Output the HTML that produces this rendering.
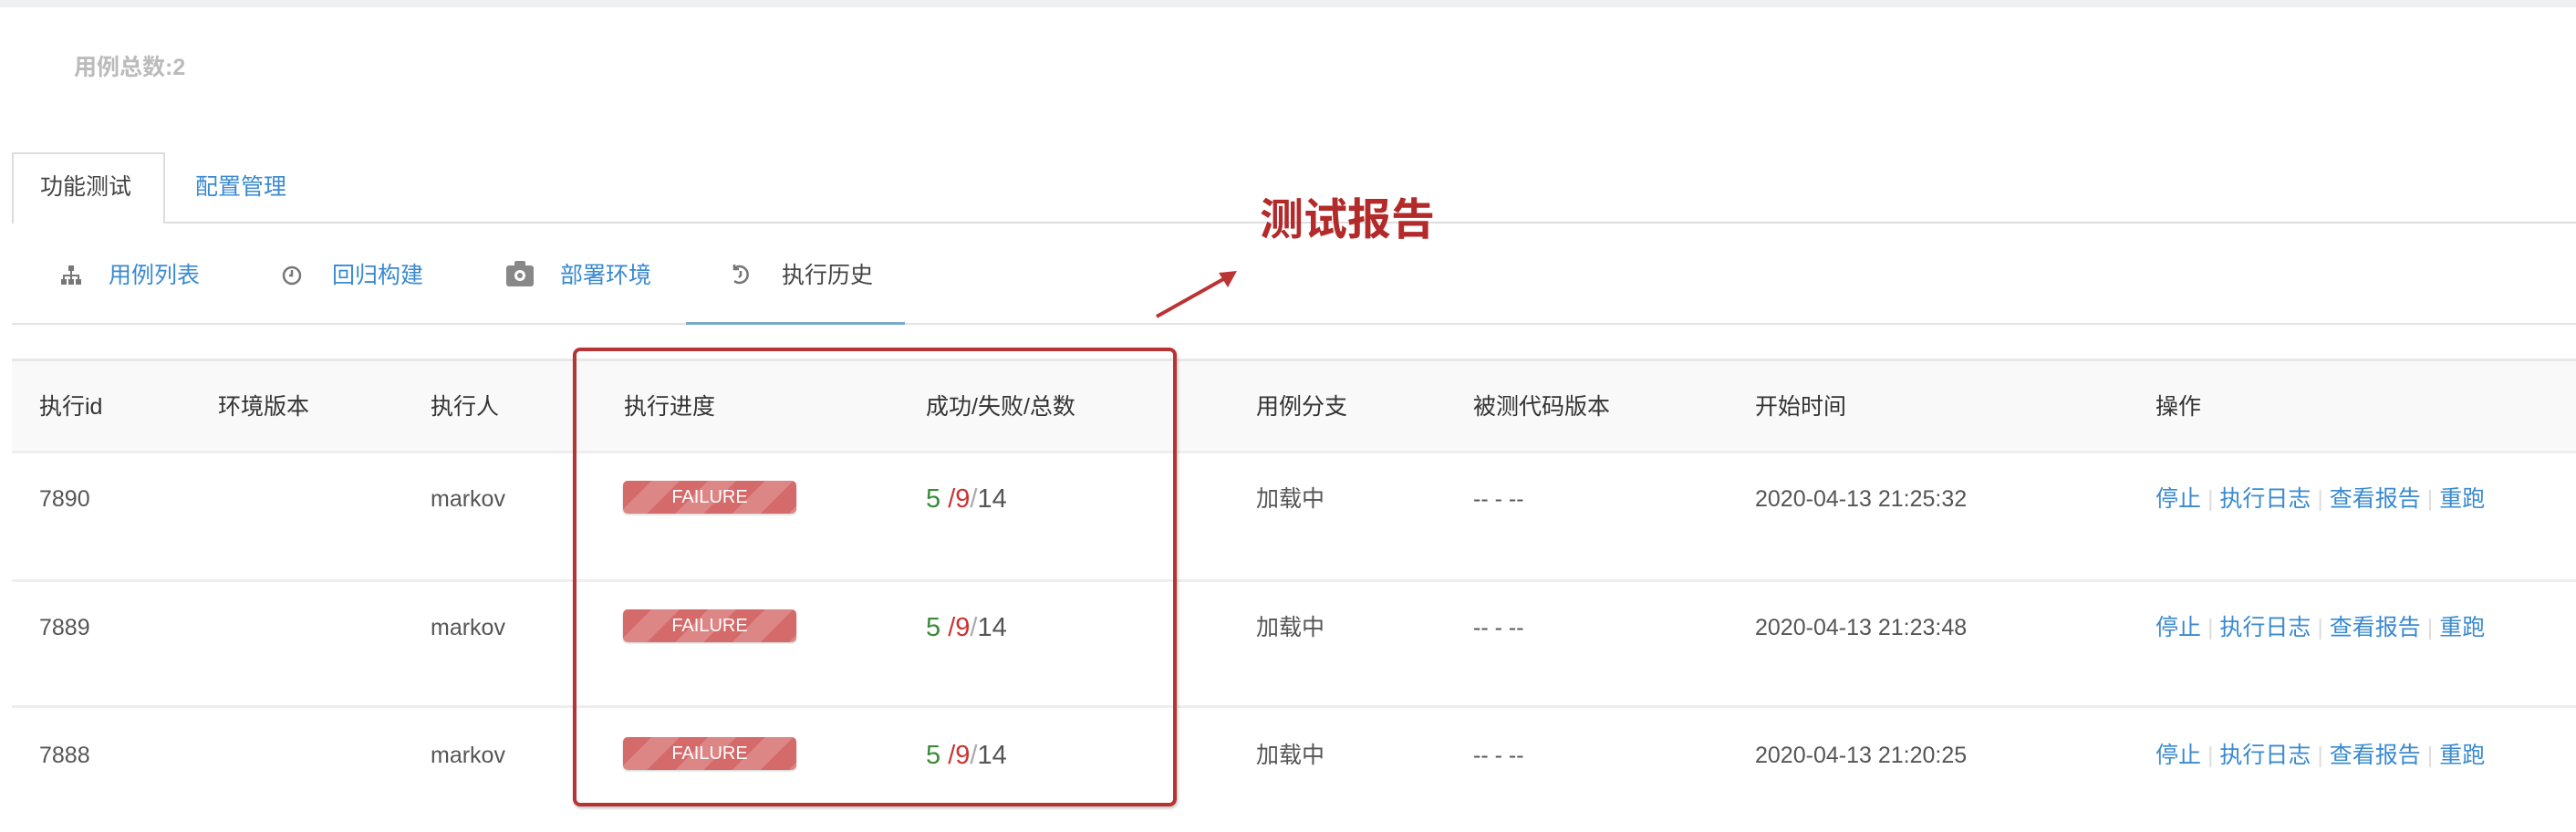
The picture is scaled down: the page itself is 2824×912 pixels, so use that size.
<!DOCTYPE html>
<html><head><meta charset="utf-8"><style>
*{margin:0;padding:0;box-sizing:border-box}
body{width:2824px;height:912px;background:#fff;position:relative;overflow:hidden;font-family:"Liberation Sans","Noto Sans CJK SC",sans-serif;font-size:25px;color:#555}
.a{position:absolute;white-space:nowrap;line-height:1}
.blue{color:#3a8ad0}
.hd{color:#333}
.badge{position:absolute;width:190px;height:36px;border-radius:5px;color:#fff;font-size:20px;text-align:center;line-height:36px;background:repeating-linear-gradient(135deg,#d46a6a 0 22px,#dd8686 22px 44px);box-shadow:0 1px 2px rgba(0,0,0,.2)}
.num{font-size:29px}
</style></head><body>
<div style="position:absolute;left:0;top:0;width:2824px;height:8px;background:#eeeff1"></div>
<div class="a" style="left:81px;top:62px;color:#bbb;font-weight:bold">用例总数:2</div>
<div style="position:absolute;left:13px;top:167px;width:168px;height:78px;border:2px solid #ddd;border-bottom:none;background:#fff;z-index:2"></div>
<div style="position:absolute;left:180px;top:243px;width:2644px;height:2px;background:#ddd"></div>
<div class="a" style="left:44px;top:193px;z-index:3;color:#444">功能测试</div>
<div class="a blue" style="left:214px;top:193px">配置管理</div>
<svg style="position:absolute;left:66px;top:290px" width="24" height="24" viewBox="0 0 24 24" fill="#777"><rect x="9" y="1" width="6" height="6"/><rect x="11" y="7" width="2" height="5"/><rect x="3" y="11" width="18" height="2"/><rect x="3" y="11" width="2" height="5"/><rect x="11" y="11" width="2" height="5"/><rect x="19" y="11" width="2" height="5"/><rect x="1" y="16" width="6" height="6"/><rect x="9" y="16" width="6" height="6"/><rect x="17" y="16" width="6" height="6"/></svg>
<div class="a blue" style="left:119px;top:290px">用例列表</div>
<svg style="position:absolute;left:308px;top:290px" width="24" height="24" viewBox="0 0 24 24" fill="none" stroke="#777" stroke-width="2.5"><circle cx="12" cy="12" r="9"/><path d="M12 6v6h-3"/></svg>
<div class="a blue" style="left:364px;top:290px">回归构建</div>
<svg style="position:absolute;left:555px;top:286px" width="30" height="28" viewBox="0 0 30 28"><rect x="0" y="5" width="30" height="23" rx="3" fill="#888"/><rect x="9" y="0" width="12" height="7" rx="2" fill="#888"/><circle cx="15" cy="16" r="6" fill="#fff"/><circle cx="15" cy="16" r="3" fill="#888"/></svg>
<div class="a blue" style="left:614px;top:290px">部署环境</div>
<svg style="position:absolute;left:800px;top:289px" width="24" height="26" viewBox="0 0 24 26" fill="none" stroke="#777" stroke-width="2.5"><path d="M5 5a9 9 0 1 1 0 14"/><path d="M5 1v5h5"/><path d="M12 8v5l-2 2"/></svg>
<div class="a" style="left:857px;top:290px;color:#444">执行历史</div>
<div style="position:absolute;left:13px;top:354px;width:2811px;height:2px;background:#e3e3e3"></div>
<div style="position:absolute;left:752px;top:353px;width:240px;height:3px;background:#7aaac8"></div>
<div class="a" style="left:1381px;top:218px;color:#b32a2a;font-size:48px;font-weight:bold">测试报告</div>
<svg style="position:absolute;left:1260px;top:285px" width="110" height="70" viewBox="0 0 110 70"><path d="M8 62L90 16" stroke="#b33" stroke-width="4"/><path d="M96 12L76 14L86 30Z" fill="#b33"/></svg>
<div style="position:absolute;left:13px;top:393px;width:2811px;height:104px;background:#f9f9f9;border-top:3px solid #e8e8e8;border-bottom:3px solid #eee"></div>
<div class="a hd" style="left:43px;top:434px">执行id</div>
<div class="a hd" style="left:239px;top:434px">环境版本</div>
<div class="a hd" style="left:472px;top:434px">执行人</div>
<div class="a hd" style="left:684px;top:434px">执行进度</div>
<div class="a hd" style="left:1015px;top:434px">成功/失败/总数</div>
<div class="a hd" style="left:1377px;top:434px">用例分支</div>
<div class="a hd" style="left:1615px;top:434px">被测代码版本</div>
<div class="a hd" style="left:1924px;top:434px">开始时间</div>
<div class="a hd" style="left:2363px;top:434px">操作</div>
<div style="position:absolute;left:13px;top:635px;width:2811px;height:3px;background:#eee"></div>
<div style="position:absolute;left:13px;top:773px;width:2811px;height:3px;background:#eee"></div>

<div class="a" style="left:43px;top:535px">7890</div><div class="a" style="left:472px;top:535px">markov</div>
<div class="badge" style="left:683px;top:527px">FAILURE</div>
<div class="a num" style="left:1015px;top:533px"><span style="color:#3a8a3a">5</span> <span style="color:#c33">/9</span><span style="color:#aaa">/</span>14</div>
<div class="a" style="left:1377px;top:535px">加载中</div><div class="a" style="left:1615px;top:535px">-- - --</div>
<div class="a" style="left:1924px;top:535px">2020-04-13 21:25:32</div>
<div class="a blue" style="left:2363px;top:535px">停止 <span style="color:#ddd">|</span> 执行日志 <span style="color:#ddd">|</span> 查看报告 <span style="color:#ddd">|</span> 重跑</div>

<div class="a" style="left:43px;top:676px">7889</div><div class="a" style="left:472px;top:676px">markov</div>
<div class="badge" style="left:683px;top:668px">FAILURE</div>
<div class="a num" style="left:1015px;top:674px"><span style="color:#3a8a3a">5</span> <span style="color:#c33">/9</span><span style="color:#aaa">/</span>14</div>
<div class="a" style="left:1377px;top:676px">加载中</div><div class="a" style="left:1615px;top:676px">-- - --</div>
<div class="a" style="left:1924px;top:676px">2020-04-13 21:23:48</div>
<div class="a blue" style="left:2363px;top:676px">停止 <span style="color:#ddd">|</span> 执行日志 <span style="color:#ddd">|</span> 查看报告 <span style="color:#ddd">|</span> 重跑</div>

<div class="a" style="left:43px;top:816px">7888</div><div class="a" style="left:472px;top:816px">markov</div>
<div class="badge" style="left:683px;top:808px">FAILURE</div>
<div class="a num" style="left:1015px;top:814px"><span style="color:#3a8a3a">5</span> <span style="color:#c33">/9</span><span style="color:#aaa">/</span>14</div>
<div class="a" style="left:1377px;top:816px">加载中</div><div class="a" style="left:1615px;top:816px">-- - --</div>
<div class="a" style="left:1924px;top:816px">2020-04-13 21:20:25</div>
<div class="a blue" style="left:2363px;top:816px">停止 <span style="color:#ddd">|</span> 执行日志 <span style="color:#ddd">|</span> 查看报告 <span style="color:#ddd">|</span> 重跑</div>

<div style="position:absolute;left:628px;top:381px;width:662px;height:503px;border:4px solid #b83434;border-radius:8px;box-shadow:1px 2px 3px rgba(0,0,0,.25)"></div>
</body></html>
